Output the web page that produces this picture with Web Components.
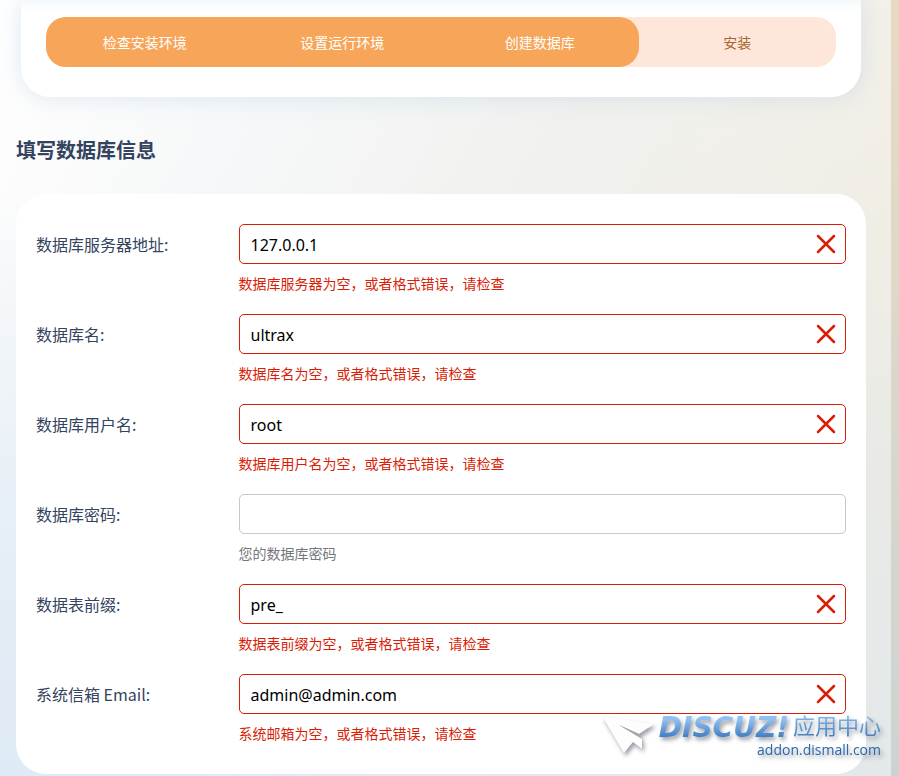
<!DOCTYPE html>
<html lang="zh-CN">
<head>
<meta charset="utf-8">
<title>填写数据库信息</title>
<style>
html{
    min-height:100%;
    background:linear-gradient(to bottom, #e7dac2 0%, #ddd8c8 40%, #cbd4d2 100%);
}

body{
    margin:0;
    font-family:"Noto Sans", "Noto Sans CJK SC", sans-serif;
    color:#34435e;
}
</style>
</head>
<body>
<install-page>
    <install-steps slot="header" done="3">
        <span>检查安装环境</span>
        <span>设置运行环境</span>
        <span>创建数据库</span>
        <span>安装</span>
    </install-steps>
    <install-card heading="填写数据库信息">
        <form-row label="数据库服务器地址:" name="dbhost" value="127.0.0.1" invalid>数据库服务器为空，或者格式错误，请检查</form-row>
        <form-row label="数据库名:" name="dbname" value="ultrax" invalid>数据库名为空，或者格式错误，请检查</form-row>
        <form-row label="数据库用户名:" name="dbuser" value="root" invalid>数据库用户名为空，或者格式错误，请检查</form-row>
        <form-row label="数据库密码:" name="dbpw" value="">您的数据库密码</form-row>
        <form-row label="数据表前缀:" name="tablepre" value="pre_" invalid>数据表前缀为空，或者格式错误，请检查</form-row>
        <form-row label="系统信箱 Email:" name="adminemail" value="admin@admin.com" invalid>系统邮箱为空，或者格式错误，请检查</form-row>
    </install-card>
</install-page>
<addon-mark></addon-mark>

<script>
class InstallPage extends HTMLElement{

    constructor(){
        super();
        this.shadow = this.attachShadow({mode:'open'});
        this.render();
    }

    render(){
        this.shadow.innerHTML = `
        <style>
        :host{
            display:block;
            box-sizing:border-box;
            min-height:100vh;
            margin-right:8px;
            padding:0 25px 2px 16px;
            background:
                radial-gradient(100% 75% at 0 100%, #deeaf5 0%, rgba(222,234,245,.7) 40%, rgba(222,234,245,0) 100%),
                linear-gradient(120deg, #fff 0%, #f6f7f8 25%, rgba(240,241,238,.95) 50%, rgba(240,241,238,0) 75%),
                linear-gradient(to bottom, #f5f0e7 0%, #f0ede5 30%, #e9eae6 60%, #e3e8e9 100%);
        }

        header{
            margin:0 5px;
            padding:17px 25px 30px;
            border-radius:0 0 30px 30px;
            background:linear-gradient(to bottom, #f5f9fd 0, #fff 12px);
            box-shadow:0 0 25px rgba(150,185,220,.3);
        }
        </style>
        <header><slot name="header"></slot></header>
        <main><slot></slot></main>
        `;
    }

}

class InstallSteps extends HTMLElement{

    constructor(){
        super();
        this.shadow = this.attachShadow({mode:'open'});
        this.render();
    }

    render(){
        const done = Number(this.getAttribute('done'));
        this.shadow.innerHTML = `
        <style>
        :host{
            --done:${done};
            display:grid;
            grid-template-columns:repeat(4, 1fr);
            height:50px;
            border-radius:20px;
            background:#ffe6da;
            font-family:"Noto Sans CJK SC", sans-serif;
            font-size:14px;
            line-height:50px;
            text-align:center;
            color:#a5662f;
        }

        .done{
            grid-area:1 / 1 / 2 / calc(var(--done) + 1);
            border-radius:20px;
            background:#f7a559;
        }

        ::slotted(span){
            grid-row:1;
        }

        ::slotted(span:nth-child(-n+3)){
            color:#fff;
        }
        </style>
        <div class="done"></div>
        <slot></slot>
        `;
        [...this.children].forEach((step, i) => step.style.gridColumn = i + 1);
    }

}

class InstallCard extends HTMLElement{

    constructor(){
        super();
        this.shadow = this.attachShadow({mode:'open'});
        this.render();
    }

    render(){
        this.shadow.innerHTML = `
        <style>
        :host{
            display:block;
            font-family:"Noto Sans CJK SC", sans-serif;
        }

        h2{
            margin:38px 0 29px;
            font-size:20px;
            line-height:30px;
        }

        form{
            display:grid;
            gap:20px;
            padding:30px 20px;
            border-radius:30px;
            background:#fff;
        }
        </style>
        <h2>${this.getAttribute('heading')}</h2>
        <form><slot></slot></form>
        `;
    }

}

class FormRow extends HTMLElement{

    constructor(){
        super();
        this.shadow = this.attachShadow({mode:'open'});
        this.render();
    }

    render(){
        const name = this.getAttribute('name');
        const type = name === 'dbpw' ? 'password' : 'text';
        this.shadow.innerHTML = `
        <style>
        :host{
            --line:#c6c8ca;
            --help:#74787d;
            display:grid;
            grid-template-columns:minmax(0, 1fr) minmax(0, 3fr);
            font-family:"Noto Sans CJK SC", sans-serif;
        }

        :host([invalid]){
            --line:#d81e06;
            --help:#d81e06;
        }

        label{
            font-size:16px;
            line-height:40px;
        }

        .box{
            display:flex;
            align-items:center;
            box-sizing:border-box;
            height:40px;
            padding:0 8px 0 11px;
            border:1px solid var(--line);
            border-radius:5px;
            background:#fff;
        }

        input{
            flex:1;
            min-width:0;
            padding:2px 0 0;
            border:0;
            outline:0;
            background:none;
            font:16px/24px "Noto Sans", sans-serif;
            color:#000;
        }

        svg{
            display:none;
            width:22px;
            height:22px;
        }

        :host([invalid]) svg{
            display:block;
        }

        p{
            margin:9px 0 1px;
            font-size:14px;
            line-height:20px;
            color:var(--help);
        }
        </style>
        <label for="${name}">${this.getAttribute('label')}</label>
        <div>
            <div class="box">
                <input type="${type}" id="${name}" name="${name}" value="${this.getAttribute('value')}">
                <svg viewBox="0 0 22 22"><path d="M3 3 19 19M19 3 3 19" fill="none" stroke="#d81e06" stroke-width="2.5" stroke-linecap="round"/></svg>
            </div>
            <p><slot></slot></p>
        </div>
        `;
    }

}

class AddonMark extends HTMLElement{

    constructor(){
        super();
        this.shadow = this.attachShadow({mode:'open'});
        this.render();
    }

    render(){
        this.shadow.innerHTML = `
        <style>
        :host{
            position:fixed;
            right:18px;
            bottom:16px;
            display:flex;
            align-items:center;
            gap:4px;
            filter:drop-shadow(2px 3px 2px rgba(50,60,75,.5));
        }

        .plane{
            width:54px;
            height:44px;
        }

        .words{
            display:grid;
            justify-items:end;
        }

        .name{
            display:flex;
            align-items:flex-end;
            gap:4px;
            white-space:nowrap;
        }

        .brand, .center{
            background:linear-gradient(to bottom, #8fc0f0 15%, #4480c4 85%);
            background-clip:text;
            -webkit-background-clip:text;
            color:transparent;
        }

        .brand{
            font:italic bold 28px/24px "DejaVu Sans", sans-serif;
        }

        .center{
            font:22px/32px "Noto Sans CJK SC", sans-serif;
        }

        .url{
            font:14px/20px "Open Sans", sans-serif;
            color:#2c67ad;
        }
        </style>
        <svg class="plane" viewBox="0 0 54 44">
            <path d="M1 4 53 12 38 22 18 13 41 27V37L32 30 23 41Z" fill="#fdfdfd"/>
            <path d="M18 13 38 22 40 26Z" fill="#a4a7ab"/>
        </svg>
        <div class="words">
            <div class="name"><span class="brand">DISCUZ!</span><span class="center">应用中心</span></div>
            <span class="url">addon.dismall.com</span>
        </div>
        `;
    }

}

customElements.define('install-page', InstallPage);
customElements.define('install-steps', InstallSteps);
customElements.define('install-card', InstallCard);
customElements.define('form-row', FormRow);
customElements.define('addon-mark', AddonMark);
</script>
</body>
</html>
